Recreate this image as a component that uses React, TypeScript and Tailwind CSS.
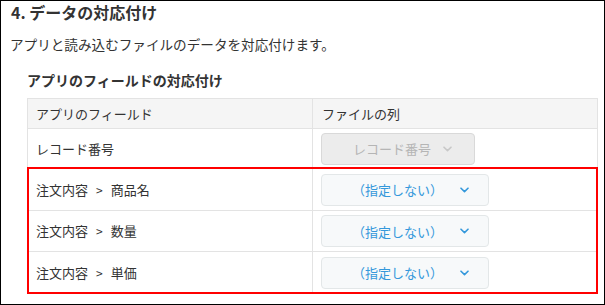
import React from "react";

const font = { fontFamily: '"Noto Sans CJK JP", "Noto Sans", sans-serif' };

function Chevron({ color }: { color: string }) {
  return (
    <svg width="9" height="6" viewBox="0 0 9 6" fill="none" className="shrink-0">
      <path d="M1 1.2 L4.5 4.6 L8 1.2" stroke={color} strokeWidth="1.6" strokeLinecap="round" strokeLinejoin="round" />
    </svg>
  );
}

function SelectBox({ label, disabled }: { label: string; disabled?: boolean }) {
  if (disabled) {
    return (
      <div className="flex items-center h-[32px] w-[154px] rounded-[4px] border border-[#d9d9d9] bg-[#ececec] pl-[31px]">
        <span className="text-[13px] text-[#b5b5b5] leading-none">{label}</span>
        <span className="ml-[12px]">
          <Chevron color="#c8c8c8" />
        </span>
      </div>
    );
  }
  return (
    <div className="flex items-center h-[32px] w-[168px] rounded-[4px] border border-[#e3e7e8] bg-[#f7f9fa] pl-[30px]">
      <span className="text-[13px] text-[#3498db] leading-none">{label}</span>
      <span className="ml-[17px]">
        <Chevron color="#3498db" />
      </span>
    </div>
  );
}

// field names with a parent table are shown as "parent > child"
function FieldName({ name }: { name: string }) {
  const parts = name.split(" > ");
  if (parts.length === 1) return <span>{name}</span>;
  return (
    <span className="flex items-center">
      {parts[0]}
      <span className="mx-[8px] text-[12px]">&gt;</span>
      {parts[1]}
    </span>
  );
}

const rows = [
  { field: "レコード番号", value: "レコード番号", disabled: true, h: "h-[40px]" },
  { field: "注文内容 > 商品名", value: "（指定しない）", h: "h-[42px]" },
  { field: "注文内容 > 数量", value: "（指定しない）", h: "h-[41px]" },
  { field: "注文内容 > 単価", value: "（指定しない）", h: "h-[42px]" },
];

export default function App() {
  return (
    <div style={font} className="w-[605px] h-[305px] border border-black bg-white text-[#333] overflow-hidden">
      <h2 className="pl-[10px] text-[16px] font-bold leading-[22px]">4. データの対応付け</h2>
      <p className="pl-[9px] mt-[11px] text-[13.6px] leading-[20px]">アプリと読み込むファイルのデータを対応付けます。</p>
      <h3 className="pl-[26px] mt-[16px] text-[14px] font-bold leading-[20px]">アプリのフィールドの対応付け</h3>

      <div className="relative ml-[26px] mt-[8px] w-[571px] border-t border-l border-r border-[#e3e3e3]">
        <div className="flex h-[30px] border-b border-[#e3e3e3] bg-[#f5f5f5] text-[13px]">
          <div className="w-[285px] border-r border-[#e3e3e3] flex items-center pl-[8px]">アプリのフィールド</div>
          <div className="flex-1 flex items-center pl-[9px]">ファイルの列</div>
        </div>
        {rows.map((r, i) => (
          <div key={i} className={`flex ${r.h} border-b border-[#e3e3e3] text-[13px]`}>
            <div className="w-[285px] border-r border-[#e3e3e3] flex items-center pl-[8px]">
              <FieldName name={r.field} />
            </div>
            <div className="flex-1 flex items-center pl-[8px]">
              <SelectBox label={r.value} disabled={r.disabled} />
            </div>
          </div>
        ))}
        <div className="absolute left-[-1px] right-[-1px] top-[68px] h-[127px] border-2 border-[#ff0000] pointer-events-none" />
      </div>
    </div>
  );
}
